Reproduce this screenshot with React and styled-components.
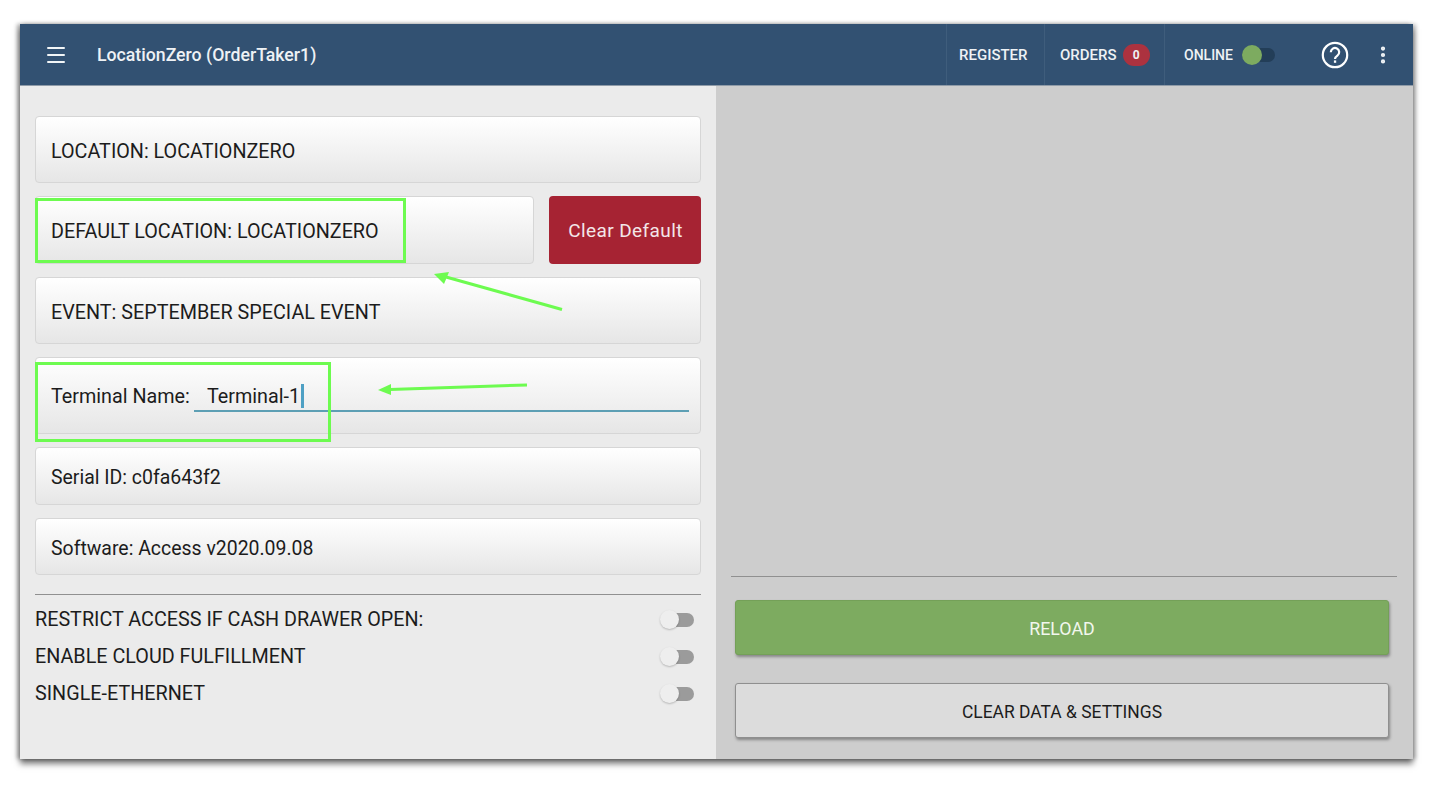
import React from "react";
import styled, { createGlobalStyle } from "styled-components";
import { Menu, MoreVertical } from "lucide-react";

const GlobalStyle = createGlobalStyle`
  html, body {
    margin: 0;
    padding: 0;
    background: #fff;
    font-family: Roboto, "Liberation Sans", sans-serif;
  }
`;

const Page = styled.div`
  position: relative;
  width: 1436px;
  height: 790px;
  padding: 24px 23px 31px 20px;
  box-sizing: border-box;
  overflow: hidden;
`;

const Window = styled.div`
  height: 100%;
  display: flex;
  flex-direction: column;
  box-shadow: 0 5px 6px rgba(0, 0, 0, 0.5), -3px 0 4px rgba(0, 0, 0, 0.3), 3px 0 4px rgba(0, 0, 0, 0.22);
`;

const Header = styled.header`
  height: 62px;
  flex: none;
  display: flex;
  align-items: stretch;
  padding-bottom: 1px;
  background: #325172;
  color: #eef2f5;
  box-shadow: inset 0 -1px 0 #8f9ba8;
  box-sizing: border-box;
`;

const MenuButton = styled.div`
  width: 77px;
  display: flex;
  align-items: center;
  padding-left: 24px;
  box-sizing: border-box;
`;

const Title = styled.div`
  flex: 1;
  display: flex;
  align-items: center;
  font-size: 17.7px;
  font-weight: 500;
`;

const NavCell = styled.div`
  width: ${(p) => p.$width}px;
  padding-left: ${(p) => p.$inset}px;
  display: flex;
  align-items: center;
  gap: 6px;
  box-sizing: border-box;
  border-left: 1px solid #3f5d7c;
  font-size: 15px;
  font-weight: 500;
`;

const Badge = styled.span`
  width: 27px;
  height: 22px;
  border-radius: 11px;
  background: #ac323f;
  display: flex;
  align-items: center;
  justify-content: center;
  font-size: 12px;
  font-weight: 700;
`;

const OnlineCell = styled(NavCell)`
  gap: 9px;
  font-size: 14px;
`;

const OnlineSwitch = styled.span`
  position: relative;
  width: 33px;
  height: 14px;
  border-radius: 7px;
  background: #233e58;
  &::before {
    content: "";
    position: absolute;
    left: 0;
    top: -3px;
    width: 20px;
    height: 20px;
    border-radius: 50%;
    background: #7dab60;
  }
`;

const HelpButton = styled.div`
  width: 72px;
  display: flex;
  align-items: center;
  justify-content: center;
`;

const DotsButton = styled.div`
  width: 24px;
  display: flex;
  align-items: center;
  justify-content: center;
  margin-right: 18px;
`;

const Body = styled.div`
  flex: 1;
  display: flex;
  min-height: 0;
`;

const LeftPanel = styled.section`
  width: 696px;
  flex: none;
  padding: 30px 15px 0;
  box-sizing: border-box;
  background: #ebebeb;
  display: flex;
  flex-direction: column;
  gap: 13px;
`;

const RightPanel = styled.section`
  flex: 1;
  background: #cdcdcd;
  display: flex;
  flex-direction: column;
  justify-content: flex-end;
  padding: 0 16px 21px 15px;
`;

const Row = styled.div`
  display: flex;
  gap: 15px;
`;

const Card = styled.div`
  flex: none;
  height: ${(p) => p.$height}px;
  box-sizing: border-box;
  padding: 3px 0 0 15px;
  display: flex;
  align-items: center;
  border: 1px solid #d6d6d6;
  border-radius: 4px;
  background: linear-gradient(#ffffff, #e6e6e6);
  color: #1c1c1c;
  font-size: ${(p) => p.$fontSize || 19.75}px;
`;

const RowCard = styled(Card)`
  flex: 1;
`;

const InputCard = styled(Card)`
  align-items: flex-start;
  padding-top: 28px;
  padding-right: 11px;
`;

const FieldLabel = styled.span`
  width: 143px;
  flex: none;
  line-height: 22px;
`;

const FieldInput = styled.div`
  flex: 1;
  height: 26px;
  padding-left: 13px;
  box-sizing: border-box;
  display: flex;
  align-items: flex-start;
  line-height: 22px;
  border-bottom: 2px solid #5d9fb4;
`;

const Caret = styled.span`
  width: 3px;
  height: 24px;
  margin: -2px 0 0 1px;
  background: #4ea0c4;
`;

const RedButton = styled.div`
  width: 152px;
  flex: none;
  box-sizing: border-box;
  padding: 1px 0 0 1px;
  display: flex;
  align-items: center;
  justify-content: center;
  border-radius: 4px;
  background: #a62333;
  color: #f3e6e8;
  font-size: 19px;
  letter-spacing: 0.4px;
`;

const Divider = styled.hr`
  margin: ${(p) => p.$margin};
  border: none;
  height: 1px;
  flex: none;
  background: #909090;
`;

const ToggleSection = styled.div`
  margin-top: 6px;
  display: flex;
  flex-direction: column;
`;

const ToggleRow = styled.div`
  height: 37px;
  display: flex;
  align-items: center;
  justify-content: space-between;
  padding-right: 7px;
  color: #1c1c1c;
  font-size: 19.75px;
`;

const Toggle = styled.span`
  position: relative;
  width: 34px;
  height: 14px;
  &::before {
    content: "";
    position: absolute;
    left: 8px;
    right: 0;
    top: 0;
    bottom: 0;
    border-radius: 7px;
    background: #9b9b9b;
  }
  &::after {
    content: "";
    position: absolute;
    left: 0;
    top: -3px;
    width: 19px;
    height: 19px;
    border-radius: 50%;
    background: #eeeeee;
    box-shadow: 0 1px 2px rgba(0, 0, 0, 0.22);
  }
`;

const ActionButton = styled.div`
  height: 55px;
  margin: ${(p) => (p.$primary ? "0" : "28px")} 8px 0 4px;
  padding-top: 2px;
  box-sizing: border-box;
  display: flex;
  align-items: center;
  justify-content: center;
  border-radius: 3px;
  font-size: ${(p) => (p.$primary ? "17.8px" : "17.45px")};
  background: ${(p) => (p.$primary ? "#7dab60" : "#dcdcdc")};
  color: ${(p) => (p.$primary ? "#f2f7ee" : "#1c1c1c")};
  border: 1px solid ${(p) => (p.$primary ? "#74a058" : "#8f8f8f")};
  box-shadow: 1px 2px 3px rgba(0, 0, 0, 0.35);
`;

const Callout = styled.div`
  position: absolute;
  left: ${(p) => p.$left}px;
  top: ${(p) => p.$top}px;
  width: ${(p) => p.$width}px;
  height: ${(p) => p.$height}px;
  box-sizing: border-box;
  border: 3px solid #6dfb50;
  pointer-events: none;
`;

const ArrowLayer = styled.svg`
  position: absolute;
  left: 0;
  top: 0;
  pointer-events: none;
`;

const HelpIcon = () => (
  <svg width="28" height="28" viewBox="0 0 28 28" fill="none">
    <circle cx="14" cy="14" r="12.2" stroke="#fff" strokeWidth="2.2" />
    <path
      d="M9.8 11.2a4.2 4.2 0 1 1 6.6 3.4c-1.4 1-2.4 1.7-2.4 3.4"
      stroke="#fff"
      strokeWidth="2.2"
    />
    <rect x="12.9" y="19.4" width="2.3" height="2.4" fill="#fff" />
  </svg>
);

const App = () => {
  return (
    <Page>
      <GlobalStyle />
      <Window>
        <Header>
          <MenuButton>
            <Menu size={24} strokeWidth={2} color="#f2f5f7" />
          </MenuButton>
          <Title>LocationZero (OrderTaker1)</Title>
          <NavCell $width={98} $inset={12}>REGISTER</NavCell>
          <NavCell $width={120} $inset={15}>
            ORDERS <Badge>0</Badge>
          </NavCell>
          <OnlineCell $width={135} $inset={19}>
            ONLINE <OnlineSwitch />
          </OnlineCell>
          <HelpButton>
            <HelpIcon />
          </HelpButton>
          <DotsButton>
            <MoreVertical size={22} strokeWidth={2.6} color="#f2f5f7" />
          </DotsButton>
        </Header>
        <Body>
          <LeftPanel>
            <Card $height={67}>LOCATION: LOCATIONZERO</Card>
            <Row>
              <RowCard $height={68}>DEFAULT LOCATION: LOCATIONZERO</RowCard>
              <RedButton>Clear Default</RedButton>
            </Row>
            <Card $height={67}>EVENT: SEPTEMBER SPECIAL EVENT</Card>
            <InputCard $height={77}>
              <FieldLabel>Terminal Name:</FieldLabel>
              <FieldInput>
                Terminal-1
                <Caret />
              </FieldInput>
            </InputCard>
            <Card $height={58} $fontSize={19.45}>Serial ID: c0fa643f2</Card>
            <Card $height={57} $fontSize={19.45}>Software: Access v2020.09.08</Card>
            <ToggleSection>
              <Divider $margin="0 0 6px" />
              <ToggleRow>
                RESTRICT ACCESS IF CASH DRAWER OPEN:
                <Toggle />
              </ToggleRow>
              <ToggleRow>
                ENABLE CLOUD FULFILLMENT
                <Toggle />
              </ToggleRow>
              <ToggleRow>
                SINGLE-ETHERNET
                <Toggle />
              </ToggleRow>
            </ToggleSection>
          </LeftPanel>
          <RightPanel>
            <Divider $margin="0 0 23px" />
            <ActionButton $primary>RELOAD</ActionButton>
            <ActionButton>CLEAR DATA &amp; SETTINGS</ActionButton>
          </RightPanel>
        </Body>
      </Window>
      <Callout $left={35} $top={198} $width={371} $height={65} />
      <Callout $left={35} $top={362} $width={296} $height={80} />
      <ArrowLayer width="1436" height="790" viewBox="0 0 1436 790">
        <path d="M562 309.500L446 277" stroke="#6dfb50" strokeWidth="3" fill="none" />
        <path d="M434 274L449 272L444 284Z" fill="#6dfb50" />
        <path d="M527 385L390 389.500" stroke="#6dfb50" strokeWidth="3" fill="none" />
        <path d="M378 390L391 384L391 395Z" fill="#6dfb50" />
      </ArrowLayer>
    </Page>
  );
};

export default App;
